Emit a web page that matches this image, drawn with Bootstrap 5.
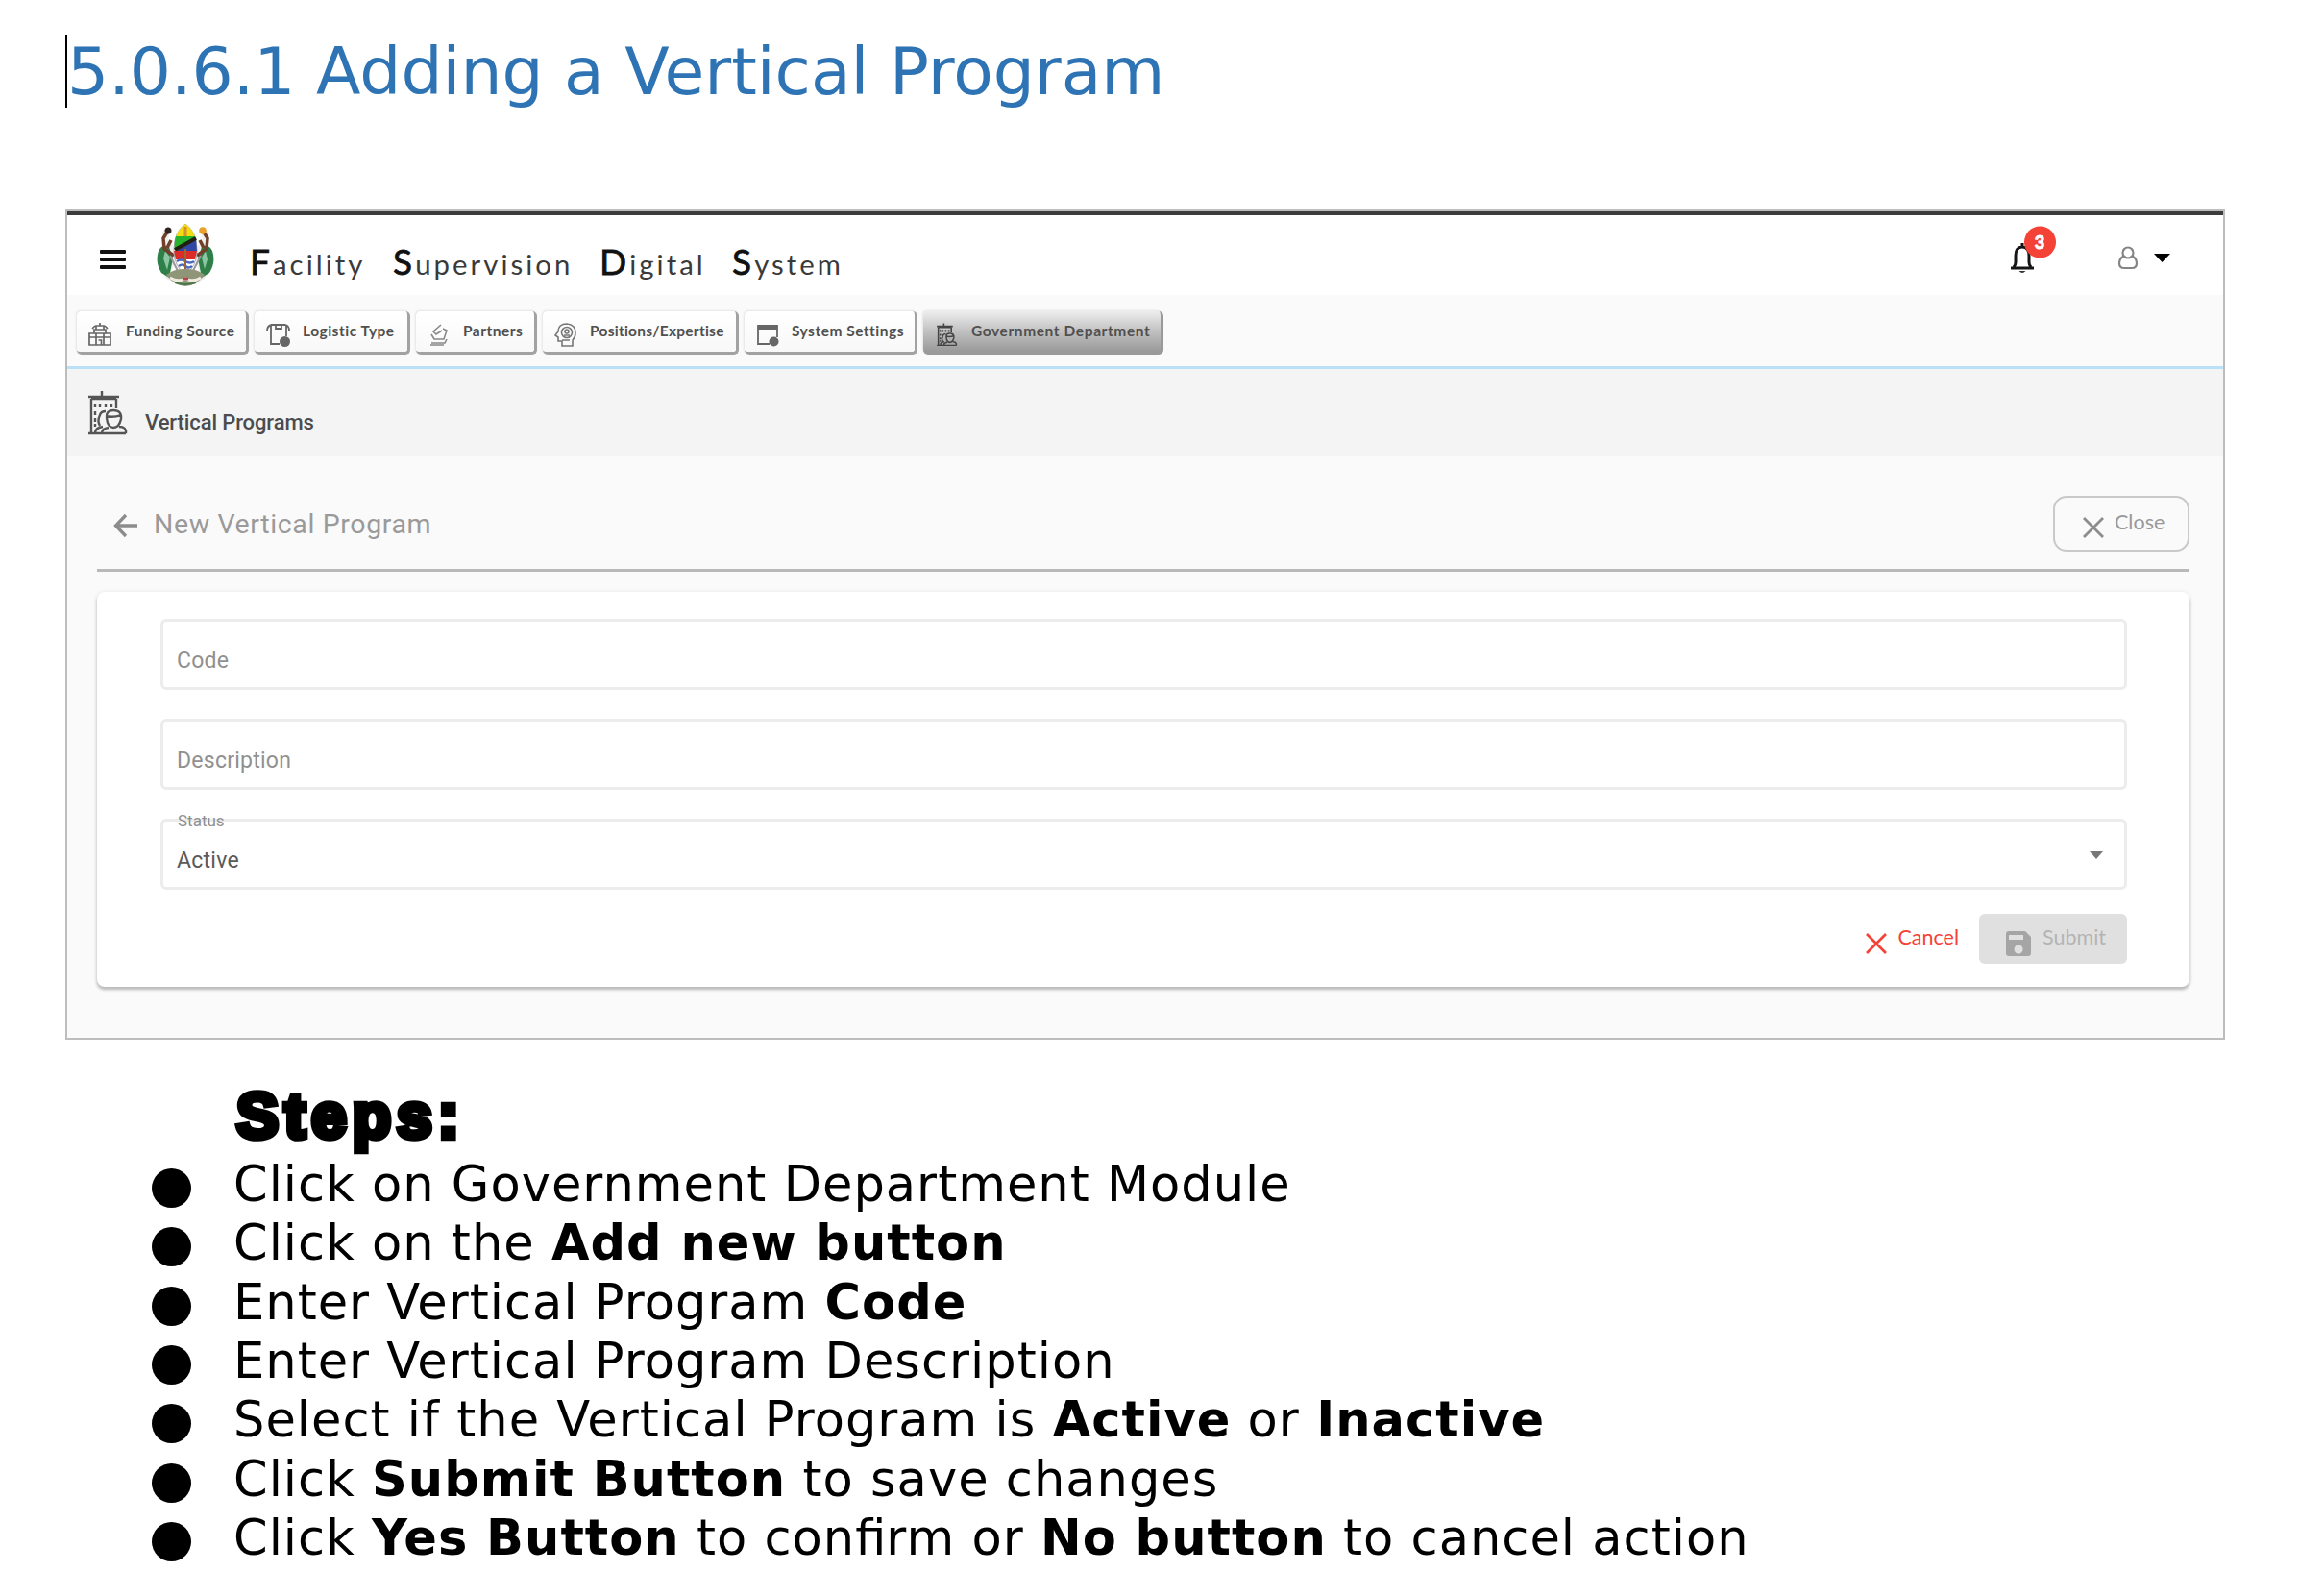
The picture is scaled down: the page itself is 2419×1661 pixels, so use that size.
<!DOCTYPE html>
<html lang="en">
<head>
<meta charset="utf-8">
<title>Adding a Vertical Program</title>
<link href="https://cdn.jsdelivr.net/npm/bootstrap@5.3.0/dist/css/bootstrap.min.css" rel="stylesheet">
<style>
body{background:#fff;color:#000;font-family:"DejaVu Sans",sans-serif;width:2419px;height:1661px;overflow:hidden}
svg{display:block;flex:none}
.doc-title{height:218px;padding:36px 0 0 68px}
.doc-title h1{margin:0;height:76px;line-height:77px;font-size:67.9px;font-weight:400;color:#2e74b5;border-left:2px solid #000;white-space:nowrap}
.shot{width:2248px;height:864px;margin-left:68px;border:2px solid #bdbdbd;background:#fafafa;font-family:Lato,sans-serif;box-sizing:border-box}
.topbar{height:87px;background:#fff;border-top:4px solid #3c3c3c;color:#111}
.burger{width:27px;height:92px;margin-left:34px;gap:4px}
.burger i{display:block;height:4px;background:#111;border-radius:1px}
.emblem{margin-left:31px}
.brand{margin-left:36px;padding-top:20px;height:83px;font-size:29.3px;letter-spacing:3.05px;color:#3a3a3a;line-height:56px;white-space:nowrap}
.brand b{font-size:37px;font-weight:400;color:#111;-webkit-text-stroke:.8px #111}
.w1{width:149px}.w2{width:215px}.w3{width:138px}
.toolrow{height:77px;padding:17px 0 0 10px;border-bottom:3px solid #bbe1fa;gap:6px}
.tool{height:45px;border-radius:5px;border:0;border-right:3px solid #a2a2a2;border-bottom:3px solid #a2a2a2;background:linear-gradient(#fff,#f8f8f8);box-shadow:-1px -1px 2px #e4e4e4;color:#505050;font-size:15.5px;letter-spacing:.5px;font-weight:700;line-height:20px;padding:10px 0 0 12px;white-space:nowrap}
.tool svg{margin-top:2px}
.tool.sel{background:linear-gradient(#eee,#c4c4c4 45%,#999);border-color:#999}
.crumb{height:91px;background:#f4f4f4;color:#4c4c4c;font-family:Roboto,sans-serif;font-weight:500;font-size:22px;letter-spacing:-.1px;padding:22px 0 0 21px}
.crumb span{margin:19px 0 0 18px;line-height:30px;white-space:nowrap}
.pagehead{margin:0 35px 0 31px;height:120px;border-bottom:3px solid #b9b9b9;padding-top:41px;color:#9a9a9a}
.pagehead h2{font-family:Roboto,sans-serif;font-size:28.5px;letter-spacing:.62px;font-weight:400;margin:12px 0 0 16px;line-height:36px;white-space:nowrap}
.btn-x{width:142px;height:58px;border:2px solid #c9c9c9;border-radius:14px;font-size:21.5px;padding:0 0 0 29px;color:#999}
.formcard{margin:21px 35px 0 31px;height:411px;background:#fff;border-radius:8px;box-shadow:0 3px 3px #bbb,0 1px 5px #ddd;padding:28px 65px 0 66px}
.fld{height:74px;border:3px solid #ececec;border-radius:6px;margin-bottom:30px;padding:26px 0 0 14px;font-family:Roboto,sans-serif;font-size:23px;letter-spacing:.25px;line-height:30px;color:#909090;font-weight:400}
.fld .t{white-space:nowrap}
.status .lbl{left:15px;top:-11px;font-size:17px;line-height:20px;letter-spacing:0}
.status .caret{margin:5px 22px 0 0}
.foot{margin-top:-5px}
.btn-cancel{color:#f44336;font-size:21.5px;margin:0 21px 0 11px}
.btn-sub{width:154px;height:52px;background:#e0e0e0;border-radius:6px;color:#b4b4b4;font-size:21.5px;padding-left:28px}
.raised{padding-bottom:4px}
.steps{padding-left:242px;font-size:51.05px;letter-spacing:1.02px;white-space:nowrap}
.steps h2{font-family:"Liberation Sans",sans-serif;font-weight:700;font-size:66px;line-height:74px;letter-spacing:6px;margin:42px 0 0 4px;padding-bottom:4px;-webkit-text-stroke:6.500px #000}
.steps li{list-style:none;height:61.33px;line-height:61.33px}
.dot{width:41px;height:41px;border-radius:50%;background:#000;margin:8px 44px 0 -84px}
.lig{letter-spacing:0}
</style>
</head>
<body>
<header class="doc-title"><h1>5.0.6.1 Adding a Vertical Program</h1></header>

<main class="shot">
  <div class="topbar d-flex">
    <div class="burger d-flex flex-column justify-content-center"><i></i><i></i><i></i></div>
    <svg class="emblem" width="62" height="83" viewBox="0 -9 62 83">
      <path d="M7 8q5-5 8 0l-2 10 10 9-6 22 14 6 14-6-6-22 10-9-2-10q3-5 8 0l-1 11 5 20-8 18-12 6H23l-12-6-8-18 5-20z" fill="#eee"/>
      <path d="M3 28q4-8 11-4l4 12-4 20-8-5Q-1 40 3 28zM59 28q-4-8-11-4l-4 12 4 20 8-5q7-11 3-23z" fill="#2f8048"/>
      <path d="M10 28l5 7-3 13-4-12zM52 28l-4 7 3 12 3-10z" fill="#8cc5a2"/>
      <path d="M13 7l-5 8 1 11 10 7M49 7l5 8-1 11-10 7M16 17l-4 8M46 17l4 8" fill="none" stroke="#70402a" stroke-width="3.500"/>
      <circle cx="13" cy="7" r="3.500" fill="#30251f"/><circle cx="49" cy="7" r="3.800" fill="#e8a12f"/>
      <path d="M31 0q12 8 12 28 0 16-12 25-12-9-12-25Q19 8 31 0z" fill="#fff" stroke="#aaa"/>
      <path d="M31 0q8 6 10 14H21Q23 6 31 0z" fill="#f2dc12"/><path d="M31 3v10" stroke="#d9902b" stroke-width="3"/>
      <path d="M21 13h20l1 4-22 10q-1-8 1-14z" fill="#26b22c"/>
      <path d="M42 16l1 12H22z" fill="#3047a5"/>
      <path d="M20 27l22-12" stroke="#201f10" stroke-width="4"/>
      <path d="M19 28h24l-2 9H21z" fill="#dd2b26"/>
      <path d="M22 39q4-3 9 0t9 0M24 44q4-3 7 0t7 0" fill="none" stroke="#4b69c4" stroke-width="2.500"/>
      <path d="M31 26v26" stroke="#9c6530" stroke-width="2"/>
      <path d="M15 33l10 20M47 33L37 53" stroke="#999" stroke-width="2"/>
      <path d="M11 53q9-7 20-6 11-1 20 6-8 11-20 12-12-1-20-12z" fill="#8f9678"/>
      <path d="M15 56q8 5 16 1 8 4 16-1" fill="none" stroke="#f0eadf" stroke-width="3"/><path d="M20 61q11 4 22 0" stroke="#49784a" stroke-width="2" fill="none"/>
      <path d="M28 57h6" stroke="#b8474a" stroke-width="3"/>
    </svg>
    <div class="brand d-flex">
      <div class="w1"><b>F</b>acility</div><div class="w2"><b>S</b>upervision</div><div class="w3"><b>D</b>igital</div><div><b>S</b>ystem</div>
    </div>
    <div class="ms-auto d-flex" style="padding:9px 53px 0 0">
      <svg width="52" height="56" viewBox="0 0 52 56"><path d="M2 46h24M5 45q2-2 2-5v-7q0-9 7-9t7 9v7q0 3 2 5M14 20v4" fill="none" stroke="#151515" stroke-width="3"/><path d="M10.500 49h7q-3.500 4-7 0z" fill="#333"/><circle cx="32.500" cy="19" r="16.500" fill="#f44336"/><text x="32" y="25.500" text-anchor="middle" font-size="18" font-weight="900" fill="#fff" stroke="#fff" stroke-width=".8" font-family="Lato">3</text></svg>
      <svg style="margin-left:60px" width="58" height="56" viewBox="0 0 58 56"><circle cx="12" cy="30" r="5.500" fill="none" stroke="#858585" stroke-width="2.200"/><path d="M7.500 33.500Q3 36 3 41q0 5 5 5h8q5 0 5-5 0-5-4.500-7.500" fill="none" stroke="#858585" stroke-width="2.200"/><path d="M39 31h17l-8.500 9z" fill="#000"/></svg>
    </div>
  </div>

  <nav class="toolrow d-flex">
    <button class="tool d-flex" style="width:179px"><svg width="24" height="24" viewBox="0 0 24 24" fill="none" stroke="#666" stroke-width="1.700"><path d="M1 11h22v12H1zM6 11V7h12v4M8 7V3h8v4M4 6l3-3M20 6l-3-3M12 3V0M1 15h22M8 11v12M16 11v12M10.500 18h3v5"/></svg><span style="margin-left:15px">Funding Source</span></button>
    <button class="tool d-flex" style="width:162px"><svg width="26" height="26" viewBox="0 0 26 26" fill="none" stroke="#666" stroke-width="1.800"><path d="M1 8q0-5 5-6h14q4 1 4 6M5 2v20h9M21 3v11M10 2v4h6V2"/><circle cx="19.500" cy="19.500" r="5.500" fill="#666" stroke="none"/></svg><span style="margin-left:12px">Logistic Type</span></button>
    <button class="tool d-flex" style="width:126px"><svg width="24" height="24" viewBox="0 0 24 24" fill="none" stroke="#888" stroke-width="1.600"><path d="M14 2L6 9l3 3 6-4M4 12l3 5h10l3-9-4-2M4 21h14l2-4M3 23h14"/></svg><span style="margin-left:13px">Partners</span></button>
    <button class="tool d-flex" style="width:204px"><svg width="24" height="25" viewBox="0 0 24 25" fill="none" stroke="#777" stroke-width="1.600"><path d="M8 24v-5H4v-4l-3-2 3-4Q4 1 13 1q9 1 9 9 0 5-3 8v6z"/><circle cx="13" cy="10" r="5.500"/><circle cx="13" cy="9" r="2"/><path d="M10 13h6M8 18h8"/></svg><span style="margin-left:13px;letter-spacing:.25px">Positions/Expertise</span></button>
    <button class="tool d-flex" style="width:180px"><svg width="24" height="25" viewBox="0 0 24 25" fill="none" stroke="#666" stroke-width="1.800"><path d="M14 22H2V3h20v12M2 6h20"/><path d="M2 4h20" stroke-width="2"/><circle cx="18.500" cy="19.500" r="5" fill="#666" stroke="none"/></svg><span style="margin-left:13px">System Settings</span></button>
    <button class="tool sel d-flex" style="width:250px"><svg width="24" height="24" viewBox="0 0 40 46" fill="none" stroke="#444" stroke-width="3"><use href="#gov"/></svg><span style="margin-left:14px;letter-spacing:.6px">Government Department</span></button>
  </nav>

  <div class="crumb d-flex">
    <svg width="42" height="47" viewBox="0 0 42 47" fill="none" stroke="#555" stroke-width="2.400"><g id="gov"><path d="M1 7h32M4 9v36M30 9v10M15 1v6M1 45h39M8 14v4M13 14v4M19 14v4M25 14v4M8 22v4M8 29v4M8 35v3M4 9h26"/><path d="M13 37q-3-5 0-11 1-4 6-4 M20 29q-1-8 7-8 9 0 8 9-2 9-8 9-6 0-7-10zM19 27q8 2 16-1M8 45q0-6 8-7M15 45q0-5 7-6M33 38q8 0 7 7"/></g></svg>
    <span>Vertical Programs</span>
  </div>

  <section class="pagehead d-flex">
    <svg style="margin:18px 0 0 17px" width="26" height="26" viewBox="0 0 26 26" fill="none" stroke="#8c8c8c" stroke-width="3.300"><path d="M25 13H3M13 2L2.500 13 13 24"/></svg>
    <h2>New Vertical Program</h2>
    <button class="btn-x bg-transparent d-flex align-items-center ms-auto"><svg class="mt-2" width="22" height="22" viewBox="0 0 22 22" fill="none" stroke="#8c8c8c" stroke-width="2.800"><path d="M1 1l20 20M21 1L1 21"/></svg><span class="raised" style="margin-left:11px">Close</span></button>
  </section>

  <section class="formcard">
    <div class="fld"><span class="t">Code</span></div>
    <div class="fld"><span class="t">Description</span></div>
    <div class="fld status position-relative d-flex"><span class="lbl position-absolute">Status</span><span class="t" style="color:#5a5a5a">Active</span>
      <svg class="caret ms-auto" width="14" height="8" viewBox="0 0 14 8"><path d="M0 0h14L7 8z" fill="#777"/></svg></div>
    <div class="foot d-flex justify-content-end align-items-center">
      <svg style="margin-top:9px" width="22" height="22" viewBox="0 0 22 22" fill="none" stroke="#f44336" stroke-width="2.700"><path d="M1 1l20 20M21 1L1 21"/></svg>
      <span class="btn-cancel raised">Cancel</span>
      <div class="btn-sub d-flex align-items-center"><svg style="margin-top:10px" width="26" height="26" viewBox="0 0 26 26"><path fill-rule="evenodd" d="M3 0h17l6 6v17q0 3-3 3H3q-3 0-3-3V3q0-3 3-3zM3 4v5h15V4zM13 14.500a4.500 4.500 0 1 0 .1 0z" fill="#a5a5a5"/></svg><span class="raised" style="margin-left:12px">Submit</span></div>
    </div>
  </section>
</main>

<section class="steps">
  <h2>Steps:</h2>
  <ul class="p-0 m-0">
    <li class="d-flex align-items-center"><span class="dot"></span><div>Click on Government Department Module</div></li>
    <li class="d-flex align-items-center"><span class="dot"></span><div>Click on the <strong>Add new button</strong></div></li>
    <li class="d-flex align-items-center"><span class="dot"></span><div>Enter Vertical Program <strong>Code</strong></div></li>
    <li class="d-flex align-items-center"><span class="dot"></span><div>Enter Vertical Program Description</div></li>
    <li class="d-flex align-items-center"><span class="dot"></span><div>Select if the Vertical Program is <strong>Active</strong> or <strong>Inactive</strong></div></li>
    <li class="d-flex align-items-center"><span class="dot"></span><div>Click <strong>Submit Button</strong> to save changes</div></li>
    <li class="d-flex align-items-center"><span class="dot"></span><div>Click <strong>Yes Button</strong> to con<span class="lig">fi</span>rm or <strong>No button</strong> to cancel action</div></li>
  </ul>
</section>
<script src="https://cdn.jsdelivr.net/npm/bootstrap@5.3.0/dist/js/bootstrap.bundle.min.js"></script>
</body>
</html>
